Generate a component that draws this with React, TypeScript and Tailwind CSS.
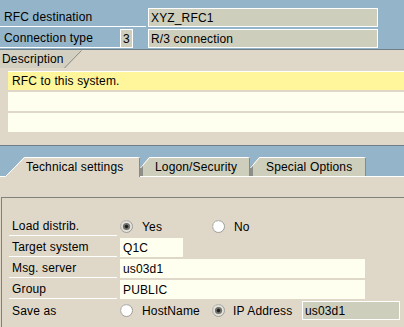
import React from "react";

const BLUE = "bg-[#94b5c9]";

function Radio({ checked }: { checked: boolean }) {
  return (
    <svg width="13" height="13" viewBox="0 0 13 13" className="shrink-0">
      <circle cx="6.5" cy="6.5" r="6" fill={checked ? "#e4e2da" : "#ffffff"} stroke="#9c9c98" strokeWidth="1" />
      <path d="M2.3 10.2 A5.2 5.2 0 0 1 10.2 2.3" fill="none" stroke="#c8c8c2" strokeWidth="1" />
      {checked && (
        <>
          <circle cx="6.5" cy="6.5" r="3.6" fill="#6f6f6a" />
          <circle cx="6.5" cy="6.5" r="1.7" fill="#1e1e1e" />
        </>
      )}
    </svg>
  );
}

function ActiveTab({ label }: { label: string }) {
  return (
    <div className="relative h-[20px] w-[135px] mb-[-1px] flex items-center pl-[21px]">
      <svg className="absolute inset-0" width="135" height="20" viewBox="0 0 135 20">
        <polygon points="0,20 19,0 135,0 135,20" fill="#dfd8c9" />
        <polyline points="0.5,19.5 19.5,0.5 133.5,0.5" fill="none" stroke="#ffffff" strokeWidth="1" />
        <line x1="134.5" y1="1" x2="134.5" y2="20" stroke="#8a8a84" strokeWidth="1" />
      </svg>
      <span className="relative">{label}</span>
    </div>
  );
}

function Tab({ label, w, pl }: { label: string; w: number; pl: string }) {
  return (
    <div className={`relative h-[19px] flex items-center ${pl}`} style={{ width: w }}>
      <svg className="absolute inset-0" width={w} height="19" viewBox={`0 0 ${w} 19`}>
        <polygon points={`0,19 0,11 9,0 ${w},0 ${w},19`} fill="#cecebc" />
        <polygon points="0,19 0,11 3,7 3,19" fill="#8e8e88" />
        <polyline points={`0.5,11 9.5,0.5 ${w - 1.5},0.5`} fill="none" stroke="#ffffff" strokeWidth="1" />
        <line x1={w - 0.5} y1="1" x2={w - 0.5} y2="19" stroke="#8a8a84" strokeWidth="1" />
      </svg>
      <span className="relative">{label}</span>
    </div>
  );
}

function LabelCell({ children, line = true }: { children: React.ReactNode; line?: boolean }) {
  return (
    <div className={`w-[108px] h-[19px] flex items-center pl-[3px] ${line ? "border-b border-white" : ""}`}>
      {children}
    </div>
  );
}

export default function App() {
  return (
    <div
      className="w-[404px] h-[327px] overflow-hidden bg-[#dfd8c9] text-black text-[12px] tracking-[0.15px] leading-none"
      style={{ fontFamily: '"Liberation Sans", Arial, sans-serif' }}
    >
      {/* Header */}
      <div className={`h-[50px] ${BLUE} border-b border-[#6e7f8a] pt-[8px]`}>
        <div className="flex h-[19px]">
          <div className="w-[146px] border-b border-white pl-[4px] flex items-center">RFC destination</div>
          <div className="ml-[2px] w-[230px] border border-white bg-[#cecebc] pl-[2px] flex items-center">XYZ_RFC1</div>
        </div>
        <div className="flex h-[19px] mt-[2px]">
          <div className="w-[120px] border-b border-white pl-[4px] flex items-center">Connection type</div>
          <div className="w-[13px] border border-white bg-[#cecebc] flex items-center justify-center">3</div>
          <div className="ml-[15px] w-[230px] border border-white bg-[#cecebc] pl-[2px] flex items-center">R/3 connection</div>
        </div>
      </div>

      {/* Description */}
      <div className="h-[96px] border-b border-[#6e7f8a]">
        <div className="relative h-[18px] w-[82px] flex items-center pl-[2px]">
          <svg className="absolute inset-0" width="82" height="18" viewBox="0 0 82 18">
            <polygon points="0,0 82,0 65,18 0,18" fill="#d3d0c1" />
            <line x1="64.5" y1="18" x2="81.5" y2="0.5" stroke="#8a8a84" strokeWidth="1" />
          </svg>
          <span className="relative">Description</span>
        </div>
        <div className="ml-[8px] mt-[3px] flex flex-col gap-[2px]">
          <div className="h-[19px] bg-[#fff59a] border-t border-white pl-[4px] flex items-center">RFC to this system.</div>
          <div className="h-[19px] bg-[#fffff0]" />
          <div className="h-[19px] bg-[#fffff0]" />
        </div>
      </div>

      {/* Tab strip */}
      <div className={`h-[31px] ${BLUE} border-b border-white flex items-end pl-[5px]`}>
        <ActiveTab label="Technical settings" />
        <Tab label="Logon/Security" w={110} pl="pl-[15px]" />
        <Tab label="Special Options" w={116} pl="pl-[16px]" />
      </div>

      {/* Group frame */}
      <div className="mt-[20px] ml-[1px] h-[200px] border-t border-l border-[#80807c] pt-[19px] pl-[7px] flex flex-col gap-[2px]">
        <div className="flex h-[19px] items-center">
          <LabelCell>Load distrib.</LabelCell>
          <div className="ml-[3px] flex items-center">
            <Radio checked />
            <span className="ml-[9px] w-[70px]">Yes</span>
            <Radio checked={false} />
            <span className="ml-[9px]">No</span>
          </div>
        </div>
        <div className="flex h-[19px]">
          <LabelCell>Target system</LabelCell>
          <div className="ml-[3px] w-[63px] bg-[#fffff0] pl-[3px] flex items-center">Q1C</div>
        </div>
        <div className="flex h-[19px]">
          <LabelCell>Msg. server</LabelCell>
          <div className="ml-[3px] w-[245px] bg-[#fffff0] pl-[3px] flex items-center">us03d1</div>
        </div>
        <div className="flex h-[19px]">
          <LabelCell>Group</LabelCell>
          <div className="ml-[3px] w-[245px] bg-[#fffff0] pl-[3px] flex items-center">PUBLIC</div>
        </div>
        <div className="flex h-[19px] items-center">
          <LabelCell line={false}>Save as</LabelCell>
          <div className="ml-[3px] flex items-center h-[19px]">
            <Radio checked={false} />
            <span className="ml-[9px] w-[70px]">HostName</span>
            <Radio checked />
            <span className="ml-[8px] w-[69px]">IP Address</span>
            <div className="w-[98px] h-[19px] border border-white bg-[#cecebc] pl-[2px] flex items-center">us03d1</div>
          </div>
        </div>
      </div>
    </div>
  );
}
